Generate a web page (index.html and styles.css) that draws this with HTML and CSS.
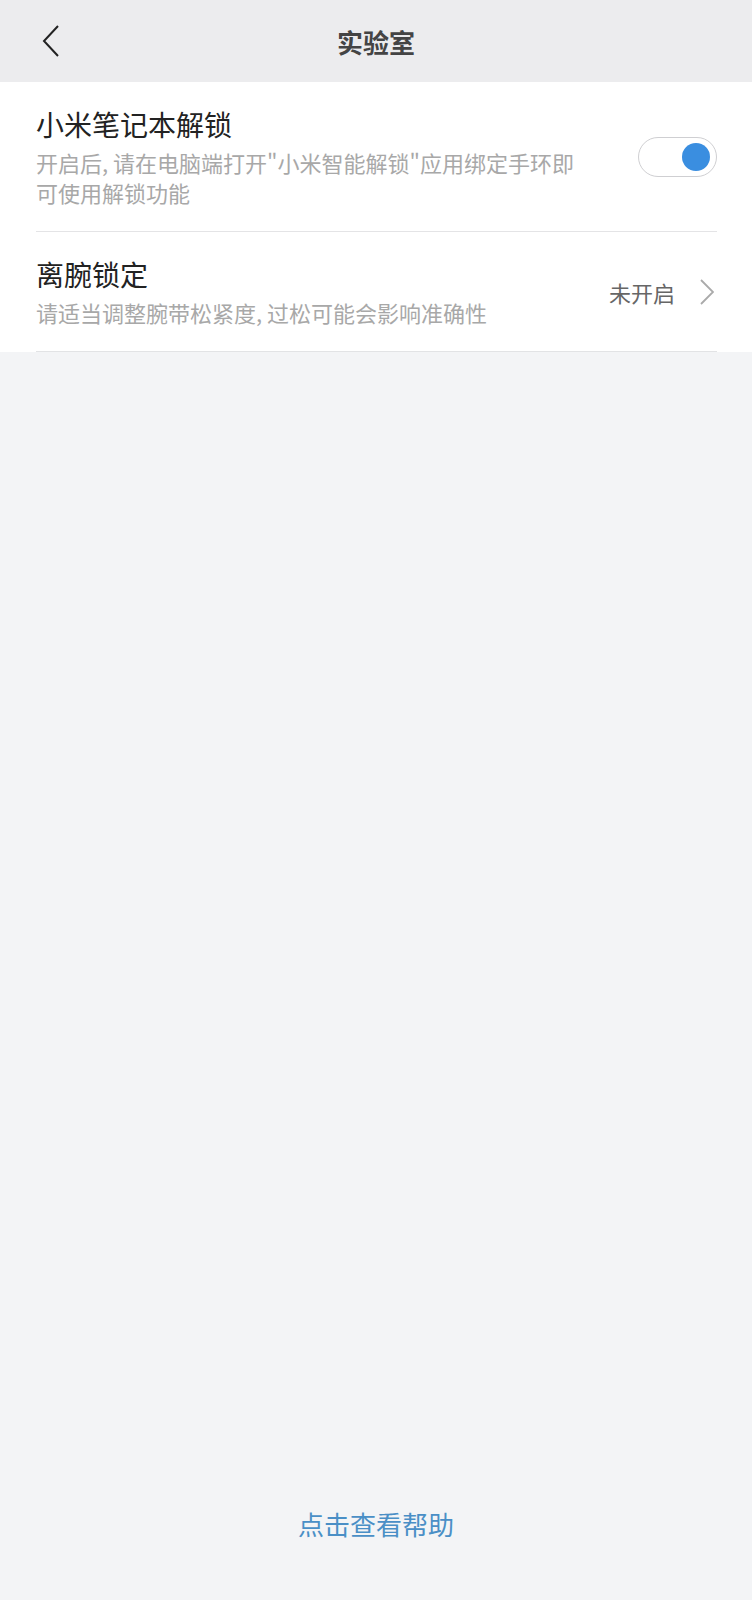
FILE: index.html
```html
<!DOCTYPE html>
<html lang="zh-CN">
<head>
  <meta charset="UTF-8">
  <title>实验室</title>
  <link rel="stylesheet" href="styles.css">
</head>
<body>
  <div class="page">

    <div class="top-bar">
      <a href="#" class="back">
        <svg width="18" height="32" viewBox="0 0 18 32">
          <path d="M16 1 L2 16 L16 31" fill="none" stroke="#222" stroke-width="2"/>
        </svg>
      </a>
      <h1>实验室</h1>
    </div>

    <div class="list">
      <div class="item">
        <div class="item-text">
          <div class="item-title">小米笔记本解锁</div>
          <div class="item-desc">开启后, 请在电脑端打开"小米智能解锁"应用绑定手环即可使用解锁功能</div>
        </div>
        <div class="switch on"><span class="knob"></span></div>
      </div>

      <div class="item">
        <div class="item-text">
          <div class="item-title">离腕锁定</div>
          <div class="item-desc">请适当调整腕带松紧度, 过松可能会影响准确性</div>
        </div>
        <div class="item-value">未开启</div>
        <svg class="arrow" width="14" height="26" viewBox="0 0 14 26">
          <path d="M1 1 L13 13 L1 25" fill="none" stroke="#aaa" stroke-width="1.8"/>
        </svg>
      </div>
    </div>

    <a href="#" class="help">点击查看帮助</a>
  </div>
</body>
</html>
```

FILE: styles.css
```css
body {
  margin: 0;
  font-family: "Noto Sans CJK SC", "Noto Sans", sans-serif;
  background-color: #f3f4f6;
}

.page {
  display: flex;
  flex-direction: column;
  min-height: 100vh;
}

.top-bar {
  height: 82px;
  background-color: #ececee;
  display: flex;
  align-items: center;
  justify-content: center;
  position: relative;
}

.top-bar h1 {
  margin: 0;
  font-size: 26px;
  font-weight: bold;
  color: #444;
}

.back {
  position: absolute;
  left: 42px;
  top: 25px;
  display: flex;
}

.list {
  background-color: #fff;
}

.item {
  display: flex;
  align-items: center;
  margin: 0 35px 0 36px;
  padding: 24px 0;
  border-bottom: 1px solid #e4e4e6;
}

.item:last-child {
  border-bottom-color: #e2e3e5;
}

.item-text {
  flex: 1;
}

.item-title {
  font-size: 28px;
  line-height: 36px;
  color: #222;
}

.item-desc {
  margin-top: 5px;
  font-size: 22px;
  line-height: 30px;
  color: #a8a8a8;
  max-width: 545px;
}

.switch {
  width: 77px;
  height: 38px;
  border: 1px solid #cfcfd2;
  border-radius: 20px;
  background-color: #fff;
  display: flex;
  align-items: center;
  justify-content: flex-end;
  box-sizing: content-box;
}

.switch .knob {
  width: 28px;
  height: 28px;
  border-radius: 50%;
  background-color: #3a8ee0;
  margin-right: 6px;
}

.item-value {
  font-size: 22px;
  color: #666;
  margin-right: 25px;
}

.arrow {
  margin-right: 3px;
}

.help {
  margin-top: auto;
  margin-bottom: 58px;
  align-self: center;
  font-size: 26px;
  line-height: 36px;
  color: #4a8fc6;
  text-decoration: none;
}
```
